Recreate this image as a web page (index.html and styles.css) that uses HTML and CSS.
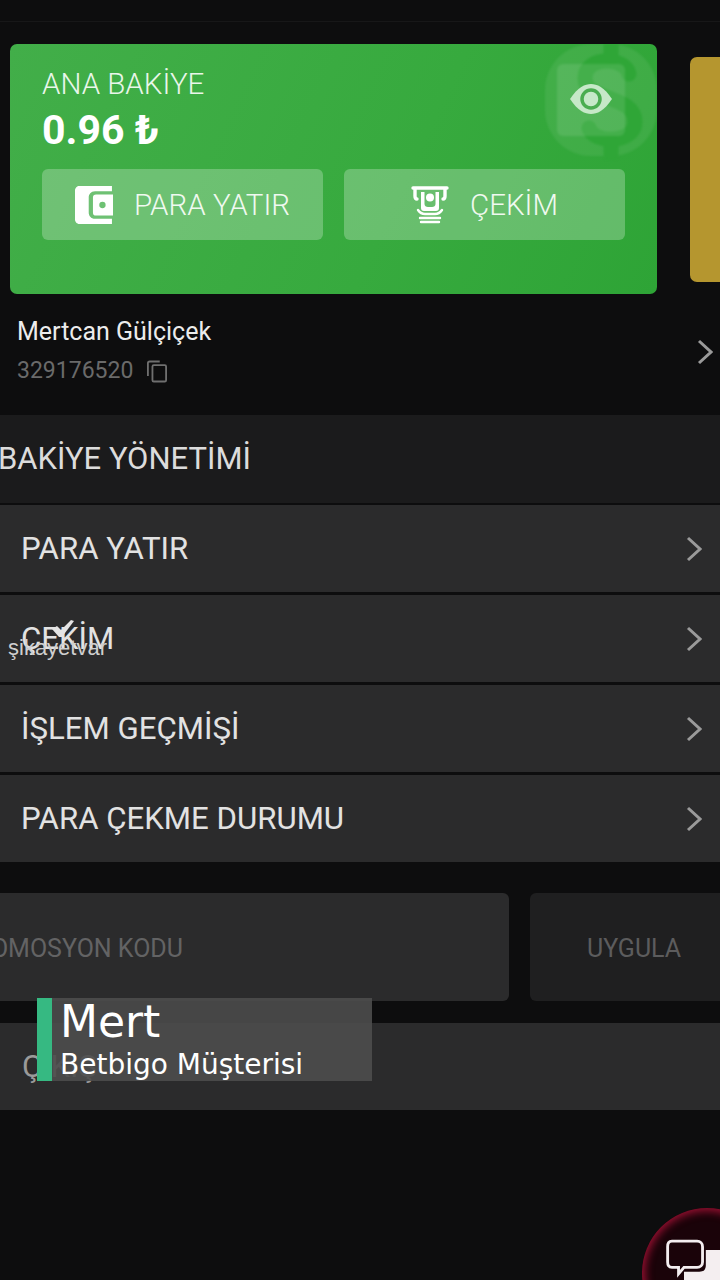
FILE: index.html
```html
<!DOCTYPE html>
<html lang="tr">
<head>
    <meta charset="UTF-8">
    <meta name="viewport" content="width=device-width, initial-scale=1.0">
    <title>Bakiye</title>
    <link rel="stylesheet" href="styles.css">
</head>
<body>
    <div class="page">
        <div class="top-bar"></div>

        <div class="cards">
            <div class="card">
                <svg class="card-bg" viewBox="0 0 112 116">
                    <rect x="0" y="0" width="112" height="112" rx="46" fill="#fff" opacity="0.07"/>
                    <path class="card-bg-s" d="M84 30 C80 12 40 12 40 34 C40 58 90 50 90 78 C90 100 48 100 44 84"/>
                    <path class="card-bg-s" d="M66 0 L66 12 M66 100 L66 110"/>
                    <rect x="12" y="20" width="68" height="72" rx="6" fill="#fff" opacity="0.1"/>
                </svg>
                <svg class="eye" viewBox="0 0 42 30">
                    <path d="M0 15 C8 3 15 0 21 0 C27 0 34 3 42 15 C34 27 27 30 21 30 C15 30 8 27 0 15 Z" fill="#c6e8c8"/>
                    <circle cx="21" cy="15" r="9" fill="none" stroke="#4aad50" stroke-width="3.5"/>
                </svg>
                <div class="card-label">ANA BAKİYE</div>
                <div class="card-amount">0.96 ₺</div>
                <div class="card-actions">
                    <div class="card-btn">
                        <svg class="btn-icon" viewBox="0 0 36 36">
                            <path d="M4 0 H35 V5 H19 C15 5 13 8 13 11 V25 C13 28 15 31 19 31 H35 V36 H4 C2 36 0 34 0 32 V4 C0 2 2 0 4 0 Z" fill="#fff"/>
                            <path d="M20 8 H36 V28 H20 C18 28 17 27 17 25 V11 C17 9 18 8 20 8 Z M26 15 A3 3 0 1 0 26 21 A3 3 0 1 0 26 15 Z" fill="#fff" fill-rule="evenodd"/>
                        </svg>
                        <span>PARA YATIR</span>
                    </div>
                    <div class="card-btn">
                        <svg class="btn-icon" viewBox="0 0 38 38">
                            <path d="M2 2 H36 M4 3 V10 C4 12 5 13 6 13 M34 3 V10 C34 12 33 13 32 13" fill="none" stroke="#fff" stroke-width="3.4" stroke-linecap="round"/>
                            <path d="M10 6 H28 V22 C28 24 27 25 25 25 H13 C11 25 10 24 10 22 Z M13.5 6 V18 C13.5 20 15 21 17 21 H21 C23 21 24.5 20 24.5 18 V6 Z" fill="#fff" fill-rule="evenodd"/>
                            <circle cx="19" cy="11.5" r="4" fill="#fff"/>
                            <path d="M7 24 C9 27 11 28 14 28 H24 C27 28 29 27 31 24 M9 32 H29 M10 36 H28" fill="none" stroke="#fff" stroke-width="2.4" stroke-linecap="round"/>
                        </svg>
                        <span>ÇEKİM</span>
                    </div>
                </div>
            </div>
            <div class="card-next"></div>
        </div>

        <div class="user-row">
            <div>
                <div class="user-name">Mertcan Gülçiçek</div>
                <div class="user-id">
                    <span>329176520</span>
                    <svg class="copy-icon" viewBox="0 0 22 24">
                        <path d="M14 1 H3 C2 1 1 2 1 3 V17" fill="none" stroke="#6f6f6f" stroke-width="2"/>
                        <rect x="6" y="5" width="15" height="18" rx="1.5" fill="none" stroke="#6f6f6f" stroke-width="2"/>
                    </svg>
                </div>
            </div>
            <svg class="chevron user-chevron" viewBox="0 0 16 26"><path d="M2 2 L14 13 L2 24"/></svg>
        </div>

        <div class="section-title">BAKİYE YÖNETİMİ</div>
        <div class="menu">
            <div class="menu-row">
                <span>PARA YATIR</span>
                <svg class="chevron" viewBox="0 0 16 26"><path d="M2 2 L14 13 L2 24"/></svg>
            </div>
            <div class="menu-row">
                <span>ÇEKİM</span>
                <svg class="chevron" viewBox="0 0 16 26"><path d="M2 2 L14 13 L2 24"/></svg>
            </div>
            <div class="menu-row">
                <span>İŞLEM GEÇMİŞİ</span>
                <svg class="chevron" viewBox="0 0 16 26"><path d="M2 2 L14 13 L2 24"/></svg>
            </div>
            <div class="menu-row">
                <span>PARA ÇEKME DURUMU</span>
                <svg class="chevron" viewBox="0 0 16 26"><path d="M2 2 L14 13 L2 24"/></svg>
            </div>
        </div>

        <div class="promo">
            <div class="promo-input"><span>PROMOSYON KODU</span></div>
            <div class="promo-btn">UYGULA</div>
        </div>

        <div class="logout">ÇIKIŞ</div>

        <!-- video overlays -->
        <div class="watermark">
            <svg class="watermark-check" viewBox="0 0 22 18"><path d="M0 9 L5 6 L9 10 L19 0 L22 1 L10 17 L7 17 Z" fill="#e4e4e4"/></svg>
            <span>şikayetvar</span>
        </div>
        <div class="caption">
            <div class="caption-name">Mert</div>
            <div class="caption-role">Betbigo Müşterisi</div>
        </div>
        <div class="chat-fab">
            <svg class="chat-icon" viewBox="0 0 54 44">
                <path d="M36 10 H48 C52 10 54 13 54 16 V44 H16 V30 H30 C34 30 36 28 36 24 Z" fill="#f4eef0"/>
                <path d="M5 2 H28 C31 2 33 4 33 7 V21 C33 24 31 26 28 26 H16 L11 32 V26 H5 C2 26 1 24 1 21 V7 C1 4 2 2 5 2 Z" fill="#1a0309" stroke="#f4eef0" stroke-width="2.6"/>
            </svg>
        </div>
    </div>
</body>
</html>
```

FILE: styles.css
```css
* {
    box-sizing: border-box;
}

body {
    margin: 0;
    background-color: #0d0d0e;
    font-family: Roboto, sans-serif;
}

.page {
    position: relative;
    width: 720px;
    height: 1280px;
    overflow: hidden;
    background-color: #0d0d0e;
}

.top-bar {
    height: 22px;
    border-bottom: 1px solid #171718;
}

.cards {
    display: flex;
    align-items: center;
    gap: 33px;
    margin: 22px 0 0 10px;
}

.card {
    position: relative;
    flex: none;
    width: 647px;
    height: 250px;
    padding: 23px 32px;
    border-radius: 7px;
    overflow: hidden;
    background-color: #33a83b;
    background-image: linear-gradient(115deg, #42ae49 0%, #37aa3e 60%, #2ea436 100%);
    color: #fff;
}

.card-bg {
    position: absolute;
    top: 0;
    right: 0;
    width: 112px;
    height: 116px;
    filter: blur(1px);
}

.card-bg-s {
    fill: none;
    stroke: #2fa637;
    stroke-width: 15;
    stroke-linecap: round;
}

.eye {
    position: absolute;
    top: 40px;
    left: 560px;
    width: 42px;
    height: 30px;
}

.card-label {
    height: 34px;
    font-size: 29.5px;
    line-height: 34px;
    font-weight: 300;
    color: #e9f6ea;
}

.card-amount {
    height: 46px;
    margin-top: 6px;
    font-size: 41px;
    line-height: 46px;
    font-weight: 700;
}

.card-actions {
    display: flex;
    gap: 21px;
    margin-top: 16px;
}

.card-btn {
    display: flex;
    align-items: center;
    justify-content: center;
    gap: 21px;
    width: 282px;
    height: 71px;
    border-radius: 6px;
    background-color: rgba(255, 255, 255, 0.25);
    font-size: 29.5px;
    font-weight: 300;
    color: #f0f9f0;
}

.btn-icon {
    width: 38px;
    height: 38px;
}

.card-next {
    flex: none;
    width: 60px;
    height: 225px;
    border-radius: 7px;
    background-color: #b5962f;
}

.user-row {
    display: flex;
    align-items: center;
    justify-content: space-between;
    height: 121px;
    padding: 0 7px 6px 17px;
}

.user-name {
    font-size: 25px;
    line-height: 28px;
    color: #ececec;
}

.user-id {
    display: flex;
    align-items: center;
    gap: 14px;
    margin-top: 11px;
    font-size: 23px;
    line-height: 28px;
    color: #6a6a6a;
}

.copy-icon {
    width: 20px;
    height: 23px;
}

.chevron {
    flex: none;
    width: 16px;
    height: 26px;
    fill: none;
    stroke: #9a9a9a;
    stroke-width: 3;
}

.section-title {
    height: 88px;
    text-indent: -2px;
    background-color: #1b1b1c;
    font-size: 31px;
    line-height: 88px;
    color: #dcdcdc;
}

.menu {
    display: flex;
    flex-direction: column;
    gap: 3px;
    padding-top: 2px;
}

.menu-row {
    display: flex;
    align-items: center;
    justify-content: space-between;
    height: 87px;
    padding: 0 18px 0 21px;
    background-color: #2b2b2c;
    font-size: 31.2px;
    color: #e2e2e2;
}

.promo {
    display: flex;
    gap: 21px;
    margin-top: 31px;
}

.promo-input {
    position: relative;
    flex: none;
    width: 509px;
    height: 108px;
    border-radius: 0 6px 6px 0;
    background-color: #2b2b2c;
    overflow: hidden;
}

.promo-input span {
    position: absolute;
    top: 41px;
    right: 326px;
    font-size: 25px;
    line-height: 30px;
    white-space: nowrap;
    color: #636364;
}

.promo-btn {
    flex: none;
    width: 208px;
    height: 108px;
    border-radius: 6px 0 0 6px;
    background-color: #1f1f20;
    font-size: 25px;
    line-height: 112px;
    padding-left: 57px;
    color: #5c5c5d;
}

.logout {
    height: 87px;
    margin-top: 22px;
    padding-left: 22px;
    background-color: #2b2b2c;
    font-size: 31px;
    line-height: 88px;
    color: #9a9a9a;
}

.watermark {
    position: absolute;
    top: 618px;
    left: 8px;
    width: 104px;
    height: 42px;
    font-family: "Liberation Sans", sans-serif;
    font-size: 22px;
    line-height: 22px;
    color: #cfcfcf;
}

.watermark span {
    position: absolute;
    left: 0;
    top: 19px;
}

.watermark-check {
    position: absolute;
    top: 2px;
    left: 44px;
    width: 22px;
    height: 18px;
}

.caption {
    position: absolute;
    top: 998px;
    left: 37px;
    width: 335px;
    height: 83px;
    padding-left: 8px;
    border-left: 15px solid rgba(53, 189, 132, 0.96);
    background-color: rgba(76, 76, 76, 0.9);
    font-family: "DejaVu Sans", sans-serif;
    color: #fff;
}

.caption-name {
    font-size: 44px;
    line-height: 47px;
}

.caption-role {
    margin-top: 4px;
    font-size: 28px;
    line-height: 32px;
    white-space: nowrap;
}

.chat-fab {
    position: absolute;
    top: 1208px;
    left: 642px;
    width: 130px;
    height: 130px;
    border-radius: 50%;
    background-color: #1a0309;
    box-shadow: inset 0 0 9px 3px #9a1032;
}

.chat-icon {
    position: absolute;
    top: 31px;
    left: 24px;
    width: 60px;
    height: 48px;
}
```
